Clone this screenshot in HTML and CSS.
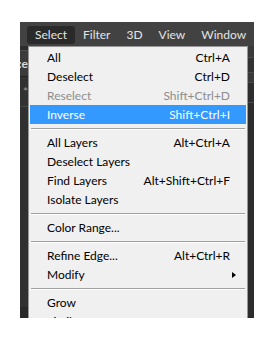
FILE: index.html
```html
<!DOCTYPE html>
<html>
<head>
    <title>Select menu</title>
    <meta charset="utf-8">
    <link rel="stylesheet" href="styles.css">
</head>
<body>
    <div class="app">
        <div class="menubar">
            <span class="top active">Select</span>
            <span class="top">Filter</span>
            <span class="top">3D</span>
            <span class="top">View</span>
            <span class="top">Window</span>
        </div>
        <div class="work">
            <div class="side left">
                <div class="band gap"></div>
                <div class="band opt"><span>e:</span></div>
                <div class="band star"><span>*</span></div>
                <div class="band low"></div>
            </div>
            <ul class="menu">
                <li class="item"><span>All</span><span class="key">Ctrl+A</span></li>
                <li class="item"><span>Deselect</span><span class="key">Ctrl+D</span></li>
                <li class="item off"><span>Reselect</span><span class="key">Shift+Ctrl+D</span></li>
                <li class="item on"><span>Inverse</span><span class="key">Shift+Ctrl+I</span></li>
                <li class="sep"></li>
                <li class="item"><span>All Layers</span><span class="key">Alt+Ctrl+A</span></li>
                <li class="item"><span>Deselect Layers</span></li>
                <li class="item"><span>Find Layers</span><span class="key">Alt+Shift+Ctrl+F</span></li>
                <li class="item"><span>Isolate Layers</span></li>
                <li class="sep"></li>
                <li class="item"><span>Color Range...</span></li>
                <li class="sep"></li>
                <li class="item"><span>Refine Edge...</span><span class="key">Alt+Ctrl+R</span></li>
                <li class="item"><span>Modify</span><span class="arrow"></span></li>
                <li class="sep"></li>
                <li class="item"><span>Grow</span></li>
                <li class="item"><span>Similar</span></li>
            </ul>
            <div class="side right">
                <div class="rband r1"></div>
                <div class="rband r2"></div>
                <div class="rband r3"></div>
                <div class="rband r4"></div>
            </div>
        </div>
    </div>
</body>
</html>
```
FILE: styles.css
```css
body{
    margin: 0;
    background-color: #ffffff;
    font-family: Lato, "Open Sans", sans-serif;
    font-size: 12px;
}
.app{
    margin: 22px 0 0 20px;
    width: 234px;
    height: 296px;
    overflow: hidden;
    background-color: #2f2f2f;
}
.menubar{
    display: flex;
    align-items: flex-start;
    height: 24px;
    padding: 4px 0 0 7px;
    box-sizing: border-box;
    background-color: #424242;
}
.top{
    height: 18px;
    line-height: 18px;
    padding: 0 8px;
    color: #e4e4e4;
    border-radius: 3px;
}
.top.active{
    background-color: #2a2a2a;
}
.work{
    display: flex;
    align-items: flex-start;
}
.side{
    flex: none;
    height: 272px;
}
.left{
    width: 8px;
    background-color: #282828;
}
.band{
    overflow: hidden;
    white-space: nowrap;
    color: #dcdcdc;
}
.gap{
    height: 4px;
    background-color: #2d2d2d;
}
.opt{
    height: 25px;
    line-height: 25px;
    background-color: #3b3b3b;
    border-top: 1px solid #4e4e4e;
    font-weight: bold;
    direction: rtl;
}
.star{
    height: 29px;
    line-height: 30px;
    background-color: #323232;
    border-top: 1px solid #222222;
    color: #9a9a9a;
    direction: rtl;
}
.low{
    height: 200px;
    background-color: #303030;
    border-top: 1px solid #474747;
}
.right{
    width: 6px;
    background-color: #2c2c2c;
}
.rband{
    border-bottom: 1px solid #4a4a4a;
}
.r1{
    height: 11px;
    background-color: #3a3a3a;
}
.r2{
    height: 14px;
    background-color: #333333;
}
.r3{
    height: 9px;
    background-color: #3a3a3a;
}
.r4{
    height: 19px;
    background-color: #2e2e2e;
}
.menu{
    flex: none;
    list-style-type: none;
    margin: 0;
    width: 220px;
    padding: 1px;
    box-sizing: border-box;
    background-color: #f0f0f0;
    border: 1px solid #979797;
}
.item{
    display: flex;
    justify-content: space-between;
    align-items: center;
    height: 19px;
    line-height: 19px;
    padding: 0 16px 0 17px;
    color: #000000;
}
.item.off{
    color: #8d8d8d;
}
.item.on{
    background-color: #3399ff;
    color: #ffffff;
}
.arrow{
    width: 0;
    height: 0;
    margin-right: -6px;
    border-top: 3.5px solid transparent;
    border-bottom: 3.5px solid transparent;
    border-left: 4px solid #000000;
}
.sep{
    height: 1px;
    margin: 4px 1px 3px 1px;
    background-color: #a0a0a0;
    border-bottom: 1px solid #ffffff;
}
```
